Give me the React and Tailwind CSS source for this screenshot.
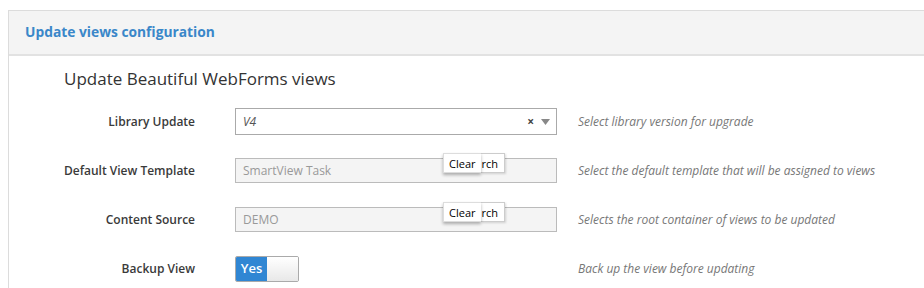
import React from 'react';

const font = { fontFamily: '"Open Sans", "Liberation Sans", sans-serif' };

function ClearTip() {
  return (
    <div className="absolute left-[207px] top-[-6px] flex h-[20px] items-stretch text-[11px] leading-[19px] text-black">
      <div className="relative z-10 bg-white px-[5px] shadow-[0_2px_3px_rgba(0,0,0,0.3)] border border-[#ddd] border-r-0">Clear</div>
      <div className="bg-white pl-[1px] pr-[6px] border border-[#ccc] border-l-0 shadow-[1px_1px_2px_rgba(0,0,0,0.15)]">rch</div>
    </div>
  );
}

function Row({ label, hint, children }) {
  return (
    <div className="flex h-[49px] items-center">
      <div className="w-[186px] text-right text-[12px] font-semibold text-[#3a3a3a]">{label}</div>
      <div className="ml-[40px] w-[322px]">{children}</div>
      <div className="ml-[21px] text-[12px] italic text-[#777]">{hint}</div>
    </div>
  );
}

export default function App() {
  return (
    <div className="h-[288px] w-[924px] overflow-hidden bg-white pl-[8px] pt-[10px]" style={font}>
      <div className="border-l border-t border-[#dcdcdc] h-full">
        <div className="flex h-[45px] items-center border-b-2 border-[#e2e2e2] bg-[#f4f4f4] pl-[16px]">
          <h2 className="text-[13.8px] font-bold text-[#3a87c9]">Update views configuration</h2>
        </div>
        <div className="pt-[11px]">
          <h3 className="pl-[55px] text-[17px] leading-[24px] text-[#333]">Update Beautiful WebForms views</h3>
          <div className="mt-[6px]">
            <Row label="Library Update" hint="Select library version for upgrade">
              <div className="flex h-[27px] items-center border border-[#aaa] bg-white pl-[7px] pr-[6px]">
                <span className="flex-1 text-[12px] italic text-[#555]">V4</span>
                <span className="mr-[7px] text-[12px] font-bold leading-none text-[#444]">×</span>
                <svg width="9" height="6" viewBox="0 0 9 6"><path d="M0 0h9L4.5 6z" fill="#888" /></svg>
              </div>
            </Row>
            <Row label="Default View Template" hint="Select the default template that will be assigned to views">
              <div className="relative flex h-[25px] items-center border border-[#bbb] bg-[#f4f4f4] pl-[7px]">
                <span className="text-[12px] text-[#999]">SmartView Task</span>
                <ClearTip />
              </div>
            </Row>
            <Row label="Content Source" hint="Selects the root container of views to be updated">
              <div className="relative flex h-[25px] items-center border border-[#bbb] bg-[#f4f4f4] pl-[7px]">
                <span className="text-[12px] text-[#999]">DEMO</span>
                <ClearTip />
              </div>
            </Row>
            <Row label="Backup View" hint="Back up the view before updating">
              <div className="flex h-[26px] w-[64px] rounded-[2px] border border-[#aaa] overflow-hidden">
                <div className="flex w-[31px] items-center justify-center bg-[#3086d3] text-[13px] font-semibold text-white">Yes</div>
                <div className="flex-1 bg-gradient-to-b from-white to-[#e8e8e8]" />
              </div>
            </Row>
          </div>
        </div>
      </div>
    </div>
  );
}
